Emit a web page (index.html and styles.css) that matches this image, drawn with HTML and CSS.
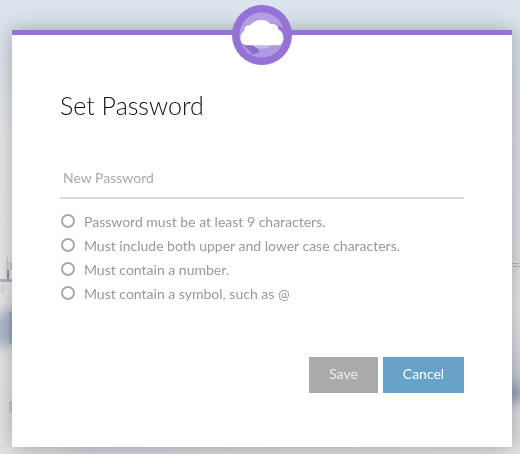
FILE: index.html
```html
<!DOCTYPE html>
<html lang="en">
<head>
<meta charset="utf-8">
<title>Set Password</title>
<link rel="stylesheet" href="styles.css">
</head>
<body>
<svg class="scene" viewBox="0 0 520 454" aria-hidden="true">
  <defs>
    <linearGradient id="sky" x1="0" y1="0" x2="0" y2="1">
      <stop offset="0" stop-color="#dae4ee"/>
      <stop offset=".17" stop-color="#e0e5eb"/>
      <stop offset=".32" stop-color="#eaebec"/>
      <stop offset=".57" stop-color="#ebeaea"/>
      <stop offset="1" stop-color="#e4e4e5"/>
    </linearGradient>
    <linearGradient id="east" x1="0" y1="0" x2="0" y2="1">
      <stop offset="0" stop-color="#d8e3ed"/>
      <stop offset=".25" stop-color="#dfe0e9"/>
      <stop offset=".56" stop-color="#e4e3e7"/>
      <stop offset=".65" stop-color="#ececea"/>
      <stop offset=".75" stop-color="#dddde4"/>
      <stop offset=".83" stop-color="#c7cbd6"/>
      <stop offset=".91" stop-color="#dfe0e3"/>
      <stop offset="1" stop-color="#e4e4e5"/>
    </linearGradient>
    <linearGradient id="ground">
      <stop offset="0" stop-color="#c3cbd1" stop-opacity="0"/>
      <stop offset=".15" stop-color="#c3cbd1" stop-opacity=".5"/>
      <stop offset="1" stop-color="#c3cbd1" stop-opacity="0"/>
    </linearGradient>
    <filter id="haze" x="-100%" y="-60%" width="300%" height="220%"><feGaussianBlur stdDeviation="6"/></filter>
  </defs>
  <rect width="520" height="454" fill="url(#sky)"/>
  <rect x="505" y="30" width="15" height="424" fill="url(#east)"/>
  <path d="M-10 318L30 300V343L-10 348Z" fill="#a3b2c7" opacity=".85" filter="url(#haze)"/>
  <ellipse cx="514" cy="393" rx="9" ry="8" fill="#8599aa" filter="url(#haze)"/>
  <path d="M0 279h12v3H0z" fill="#aeb7c2"/>
  <path d="M5 262h5v17H5z" fill="#e5ddd5"/>
  <path d="M7 257h1v22H7zM10 262h2v8h-2z" fill="#c7cbd0"/>
  <path d="M7 270h2v9H7z" fill="#8b98a8"/>
  <path d="M1 284h1v10H1zM3 284h1v9H3z" fill="#cbced3"/>
  <path d="M9 312h3v32H9z" fill="#8b9bb0" opacity=".4"/>
  <path d="M9 401h3v14H9z" fill="#ccd0cd"/>
  <path d="M8 400h4v1H8zM9 413h3v2H9z" fill="#f0f0e9"/>
  <path d="M512 263h7v1h-7zM513 266h7v1h-7zM514 271h1v1h-1z" fill="#b9bac0"/>
  <rect y="447" x="12" width="500" height="7" fill="url(#ground)"/>
</svg>
<main class="card">
  <svg class="logo" viewBox="0 0 60 60" role="img" aria-label="Cloud">
    <circle cx="30" cy="30" r="30" fill="#9573d6"/>
    <circle cx="30" cy="30" r="22.500" fill="#b59de3"/>
    <path d="M11 39L20 49Q25 52 31 52L45 45L48 39Z" fill="#b199e1"/>
    <path d="M11 39L20.500 49.500L28 47L22 39Z" fill="#8c6ccb"/>
    <path d="M46 20L51 23L53 30L48 38H40Z" fill="#9877d4"/>
    <path d="M20 39H40A10.500 7 0 0 1 20 39Z" fill="#c6b5e9"/>
    <path d="M14 40.200C10.500 39.600 8.400 36.600 8.400 33C8.400 29.500 10 27.200 12.300 26C11.800 22.500 14.500 20 18.300 20.300C21 16.800 25 15 29.300 15C33.300 15 36.600 16.500 38.600 19.200C42.500 18.300 46.300 20.700 46.500 24.600C49.700 26 51.300 29 51.300 32.500C51.300 37 49.700 40.200 45.500 40.200Z" fill="#fff"/>
  </svg>
  <h1 class="title">Set Password</h1>
  <form>
    <input class="password" type="password" placeholder="New Password" aria-label="New Password">
    <ul class="rules">
      <li>Password must be at least 9 characters.</li>
      <li>Must include both upper and lower case characters.</li>
      <li>Must contain a number.</li>
      <li>Must contain a symbol, such as @</li>
    </ul>
    <div class="actions">
      <button class="button save" type="button" disabled>Save</button>
      <button class="button cancel" type="button">Cancel</button>
    </div>
  </form>
</main>
</body>
</html>
```
FILE: styles.css
```css
*, *::before { box-sizing: border-box; }
body {
  margin: 0;
  height: 454px;
  padding: 30px 8px 7px 12px;
  overflow: hidden;
  font-family: Lato, "Liberation Sans", sans-serif;
}
.scene {
  position: fixed;
  inset: 0;
  width: 520px;
  height: 454px;
  z-index: -1;
}
.card {
  position: relative;
  height: 417px;
  padding: 51px 48px 0;
  border-top: 5px solid #9573d6;
  background: #fff;
  box-shadow: 0 0 20px rgba(0, 0, 0, .3);
}
.logo {
  position: absolute;
  top: -30px;
  left: 220px;
  width: 60px;
  height: 60px;
}
.title {
  margin: 0;
  font-size: 25px;
  font-weight: 300;
  line-height: 39px;
  color: #111;
}
.password {
  display: block;
  width: 404px;
  height: 41px;
  margin: 33px 0 0;
  padding: 0 3px;
  border: 0;
  border-bottom: 2px solid #ddd;
  outline: 0;
  background: transparent;
  font: 14px/20px Lato, sans-serif;
}
.password::placeholder { color: #aaa; opacity: 1; }
.rules {
  margin: 11px 0 0;
  padding: 0;
  list-style: none;
  color: #999;
  font-size: 14px;
  line-height: 24px;
}
.rules li {
  display: flex;
  height: 24px;
  gap: 9px;
}
.rules li::before {
  content: "";
  width: 14px;
  height: 14px;
  margin: 4px 0 0 1px;
  border: 2px solid #aaa;
  border-radius: 50%;
}
.actions {
  display: flex;
  justify-content: flex-end;
  gap: 5px;
  margin-top: 51px;
}
.button {
  height: 36px;
  padding: 0 0 2px;
  border: 0;
  color: #fff;
  font: 14px/20px Lato, sans-serif;
}
.save { width: 69px; background: #aaa; color: #eee; }
.cancel { width: 81px; background: #67a2c8; }
```
